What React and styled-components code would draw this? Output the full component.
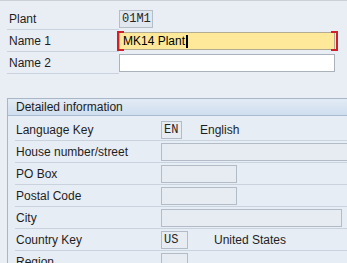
import React from "react";
import styled, { createGlobalStyle, css } from "styled-components";

const GlobalStyle = createGlobalStyle`
  html, body {
    margin: 0;
    padding: 0;
    background: #e9eef4;
  }
  body {
    font-family: "Liberation Sans", Arial, sans-serif;
    font-size: 12px;
    color: #1e1e1e;
    overflow: hidden;
  }
`;

const Page = styled.div`
  width: 347px;
  height: 263px;
  box-sizing: border-box;
  border-top: 1px solid #c9d0d8;
  padding-top: 7px;
  overflow: hidden;
`;

const TopForm = styled.div`
  display: flex;
  flex-direction: column;
  padding-left: 7px;
`;

const Row = styled.div`
  display: flex;
  height: 22px;
  box-sizing: border-box;
  ${(p) =>
    p.$underlined &&
    css`
      border-bottom: 1px solid #cad3dd;
    `}
`;

const Label = styled.div`
  width: ${(p) => p.$width}px;
  box-sizing: border-box;
  padding-left: ${(p) => p.$indent}px;
  display: flex;
  align-items: center;
  white-space: nowrap;
  ${(p) =>
    p.$underlined &&
    css`
      border-bottom: 1px solid #cad3dd;
    `}
`;

const FieldCell = styled.div`
  display: flex;
  align-items: flex-start;
  padding-top: 2px;
`;

const variants = {
  display: css`
    background: #e1e7ee;
    border-color: #b5bec8;
  `,
  empty: css`
    background: #e6ecf2;
    border-color: #b3bcc6;
  `,
  white: css`
    background: #ffffff;
    border-color: #aab2bb;
  `,
  focus: css`
    background: #fee99b;
    border-color: #b3ab92;
  `,
};

const Field = styled.div`
  position: relative;
  width: ${(p) => p.$width}px;
  height: 18px;
  box-sizing: border-box;
  border: 1px solid;
  display: flex;
  align-items: center;
  padding-left: 2px;
  ${(p) => variants[p.$variant]}
`;

const Mono = styled.span`
  font-family: "Liberation Mono", "Courier New", monospace;
  font-size: 12px;
  color: #262626;
`;

const InputText = styled.span`
  font-size: 12px;
  color: #000;
  padding-left: 1px;
`;

const Caret = styled.span`
  display: inline-block;
  width: 2px;
  height: 13px;
  background: #000;
  margin-left: 1px;
  vertical-align: middle;
`;

const Bracket = styled.span`
  position: absolute;
  top: -2px;
  bottom: -2px;
  width: 5px;
  border: 2px solid #d2202a;
  ${(p) =>
    p.$side === "left"
      ? css`
          left: -3px;
          border-right: none;
        `
      : css`
          right: -4px;
          border-left: none;
        `}
`;

const Description = styled.span`
  margin-left: ${(p) => p.$gap}px;
  align-self: center;
  margin-top: -2px;
  white-space: nowrap;
`;

const Group = styled.div`
  margin: 24px 0 0 7px;
  width: 420px;
  border: 1px solid #a8b6c5;
  border-right: none;
  background: #e7edf4;
`;

const GroupHeader = styled.div`
  height: 16px;
  border-bottom: 1px solid #a9bbcf;
  background: linear-gradient(#e2ebf5, #cfdeee);
  padding-left: 8px;
  display: flex;
  align-items: center;
  color: #1c1c1c;
`;

const GroupBody = styled.div`
  padding: 3px 0 0 7px;
  display: flex;
  flex-direction: column;
`;

const topRows = [
  { label: "Plant", field: { width: 34, variant: "display", mono: "01M1" } },
  { label: "Name 1", field: { width: 216, variant: "focus", text: "MK14 Plant", focused: true } },
  { label: "Name 2", field: { width: 216, variant: "white" } },
];

const detailRows = [
  { label: "Language Key", field: { width: 21, variant: "empty", mono: "EN" }, desc: "English", gap: 18 },
  { label: "House number/street", field: { width: 260, variant: "empty" } },
  { label: "PO Box", field: { width: 76, variant: "empty" } },
  { label: "Postal Code", field: { width: 76, variant: "empty" } },
  { label: "City", field: { width: 181, variant: "empty" } },
  { label: "Country Key", field: { width: 27, variant: "empty", mono: "US" }, desc: "United States", gap: 26 },
  { label: "Region", field: { width: 27, variant: "empty" } },
];

function FieldBox({ width, variant, mono, text, focused }) {
  return (
    <Field $width={width} $variant={variant}>
      {mono && <Mono>{mono}</Mono>}
      {text && (
        <InputText>
          {text}
          <Caret />
        </InputText>
      )}
      {focused && (
        <>
          <Bracket $side="left" />
          <Bracket $side="right" />
        </>
      )}
    </Field>
  );
}

export default function App() {
  return (
    <>
      <GlobalStyle />
      <Page>
        <TopForm>
          {topRows.map((r) => (
            <Row key={r.label}>
              <Label $width={112} $indent={2} $underlined>
                {r.label}
              </Label>
              <FieldCell>
                <FieldBox {...r.field} />
              </FieldCell>
            </Row>
          ))}
        </TopForm>
        <Group>
          <GroupHeader>Detailed information</GroupHeader>
          <GroupBody>
            {detailRows.map((r) => (
              <Row key={r.label} $underlined>
                <Label $width={146} $indent={1}>
                  {r.label}
                </Label>
                <FieldCell>
                  <FieldBox {...r.field} />
                  {r.desc && <Description $gap={r.gap}>{r.desc}</Description>}
                </FieldCell>
              </Row>
            ))}
          </GroupBody>
        </Group>
      </Page>
    </>
  );
}
